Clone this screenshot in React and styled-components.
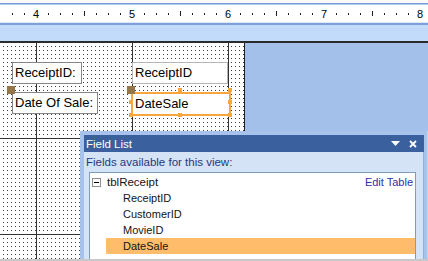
import React from "react";
import styled, { createGlobalStyle } from "styled-components";

const Global = createGlobalStyle`
  html, body { margin: 0; padding: 0; background: #fff; }
  body { font-family: "Liberation Sans", Arial, sans-serif; overflow: hidden; }
  #root { width: 428px; height: 261px; }
`;

const Screen = styled.div`
  position: relative;
  width: 428px;
  height: 261px;
  box-sizing: border-box;
  border-bottom: 2px solid #c8c8c8;
  display: flex;
  flex-direction: column;
  overflow: hidden;
  background: #fff;
`;

const TopGap = styled.div`
  height: 3px;
  flex: none;
  background: #fafafa;
`;

const BlueRule = styled.div`
  height: 2px;
  flex: none;
  background: linear-gradient(#729bd9 0 1px, #b4cbef 1px);
`;

const Ruler = styled.div`
  height: 17px;
  flex: none;
  background: #fff;
  display: flex;
  align-items: center;
  padding-left: 6px;
`;

const RulerCell = styled.div`
  width: 12px;
  height: 100%;
  flex: none;
  display: flex;
  justify-content: center;
  align-items: center;
  font-size: 11px;
  color: #000;
`;

const Tick = styled.span`
  width: 1px;
  height: ${(p) => (p.$long ? 5 : 2)}px;
  background: #1e1e1e;
`;

const RulerBase = styled.div`
  height: 3px;
  flex: none;
  background: linear-gradient(#dce7f8 0 1px, #7ca1da 1px);
`;

const SectionBar = styled.div`
  height: 16px;
  flex: none;
  background: #c3dbfb;
`;

const DarkRule = styled.div`
  height: 2px;
  flex: none;
  background: #2a2a2a;
`;

const Workspace = styled.div`
  flex: 1;
  display: flex;
  min-height: 0;
`;

const DesignGrid = styled.div`
  position: relative;
  width: 244px;
  flex: none;
  border-right: 1px solid #1f1f1f;
  background-color: #fff;
  background-image:
    linear-gradient(to right, #333 1px, transparent 1px),
    linear-gradient(to bottom, #333 1px, transparent 1px),
    conic-gradient(from 270deg at 1px 1px, #3a3a3a 90deg, transparent 0);
  background-size: 96px 100%, 100% 96px, 4px 4px;
  background-position: 36px 0, 0 95px, 3px 3px;
`;

const Outside = styled.div`
  flex: 1;
  background: #a2c0e9;
`;

const Control = styled.div`
  position: absolute;
  left: ${(p) => p.$x}px;
  top: ${(p) => p.$y}px;
  width: ${(p) => p.$w}px;
  height: 22px;
  box-sizing: border-box;
  border: 1px solid ${(p) => (p.$field ? "#b5b5b5" : "#858585")};
  background: #fff;
  font-size: 13px;
  line-height: 20px;
  padding-left: 2px;
  color: #000;
  white-space: nowrap;
`;

const SelectedControl = styled.div`
  position: absolute;
  left: ${(p) => p.$x}px;
  top: ${(p) => p.$y}px;
  width: ${(p) => p.$w}px;
  height: 24px;
  box-sizing: border-box;
  border: 2px solid #f8a63e;
  background: #fff;
  font-size: 13px;
  line-height: 19px;
  padding-left: 2px;
  color: #000;
  white-space: nowrap;
`;

const MoveHandle = styled.div`
  position: absolute;
  left: ${(p) => p.$x}px;
  top: ${(p) => p.$y}px;
  width: 8px;
  height: 8px;
  background: #94764b;
`;

const SizeHandle = styled.div`
  position: absolute;
  left: ${(p) => p.$x}px;
  top: ${(p) => p.$y}px;
  width: 4px;
  height: 4px;
  background: #f8a63e;
`;

const FieldList = styled.div`
  position: absolute;
  left: 80px;
  top: 131px;
  right: 0;
  bottom: 0;
  box-sizing: border-box;
  background: #a7c3ec;
  border-right: 1px solid #c2d6f2;
  padding: 4px 3px 0 4px;
  display: flex;
  flex-direction: column;
`;

const TitleBar = styled.div`
  height: 17px;
  flex: none;
  background: #3a609d;
  color: #fff;
  font-size: 11.5px;
  display: flex;
  align-items: center;
  padding: 0 7px 0 2px;
  box-shadow: inset -1px 0 0 #3a609d;
`;

const TitleText = styled.span`
  flex: 1;
`;

const TitleButtons = styled.div`
  display: flex;
  align-items: center;
  gap: 9px;
`;

const Body = styled.div`
  flex: 1;
  display: flex;
  flex-direction: column;
  background: #d5e3f6;
  padding-right: 7px;
  min-height: 0;
  border-right: 1px solid #8fb0e2;
`;

const Caption = styled.div`
  height: 20px;
  flex: none;
  line-height: 21px;
  padding-left: 2px;
  font-size: 11.5px;
  color: #1f3a7c;
`;

const ListBox = styled.div`
  flex: 1;
  margin-left: 5px;
  background: #fff;
  border: 1px solid #7f9db9;
  border-bottom: none;
  padding-top: 1px;
  font-size: 11px;
  color: #141414;
`;

const TableRow = styled.div`
  height: 16px;
  display: flex;
  align-items: center;
  padding: 0 2px;
`;

const ExpandBox = styled.span`
  width: 9px;
  height: 9px;
  box-sizing: border-box;
  border: 1px solid #8f8f8f;
  background: #fff;
  display: flex;
  align-items: center;
  justify-content: center;
  margin-right: 6px;
  &::after {
    content: "";
    width: 5px;
    height: 1px;
    background: #000;
  }
`;

const TableName = styled.span`
  font-size: 11.5px;
  flex: 1;
`;

const EditLink = styled.span`
  font-size: 11px;
  color: #2f2fb2;
`;

const FieldRow = styled.div`
  height: 16px;
  line-height: 16px;
  margin-left: 16px;
  padding-left: 17px;
  background: ${(p) => (p.$selected ? "#ffbd6b" : "transparent")};
`;

const rulerCells = Array.from({ length: 35 }, (_, i) => i + 1);
const handles = [
  [178, 45],
  [228, 45],
  [129, 57],
  [228, 57],
  [129, 70],
  [178, 70],
  [228, 70],
];
const fields = ["ReceiptID", "CustomerID", "MovieID", "DateSale"];

export default function App() {
  return (
    <>
      <Global />
      <Screen>
        <TopGap />
        <BlueRule />
        <Ruler>
          {rulerCells.map((k) => (
            <RulerCell key={k}>
              {k % 8 === 3 ? (
                4 + (k - 3) / 8
              ) : (
                <Tick $long={k % 8 === 7} />
              )}
            </RulerCell>
          ))}
        </Ruler>
        <RulerBase />
        <SectionBar />
        <DarkRule />
        <Workspace>
          <DesignGrid>
            <Control $x={12} $y={19} $w={70}>ReceiptID:</Control>
            <Control $x={12} $y={49} $w={86}>Date Of Sale:</Control>
            <MoveHandle $x={7} $y={43} />
            <Control $x={132} $y={19} $w={96} $field>ReceiptID</Control>
            <SelectedControl $x={131} $y={49} $w={100}>DateSale</SelectedControl>
            {handles.map(([x, y], i) => (
              <SizeHandle key={i} $x={x} $y={y} />
            ))}
            <MoveHandle $x={127} $y={43} />
          </DesignGrid>
          <Outside />
        </Workspace>
        <FieldList>
          <TitleBar>
            <TitleText>Field List</TitleText>
            <TitleButtons>
              <svg width="9" height="5" viewBox="0 0 9 5">
                <polygon points="0,0 9,0 4.5,5" fill="#fff" />
              </svg>
              <svg width="8" height="8" viewBox="0 0 8 8">
                <path d="M1 1 L7 7 M7 1 L1 7" stroke="#fff" strokeWidth="1.8" />
              </svg>
            </TitleButtons>
          </TitleBar>
          <Body>
            <Caption>Fields available for this view:</Caption>
            <ListBox>
              <TableRow>
                <ExpandBox />
                <TableName>tblReceipt</TableName>
                <EditLink>Edit Table</EditLink>
              </TableRow>
              {fields.map((f) => (
                <FieldRow key={f} $selected={f === "DateSale"}>
                  {f}
                </FieldRow>
              ))}
            </ListBox>
          </Body>
        </FieldList>
      </Screen>
    </>
  );
}
